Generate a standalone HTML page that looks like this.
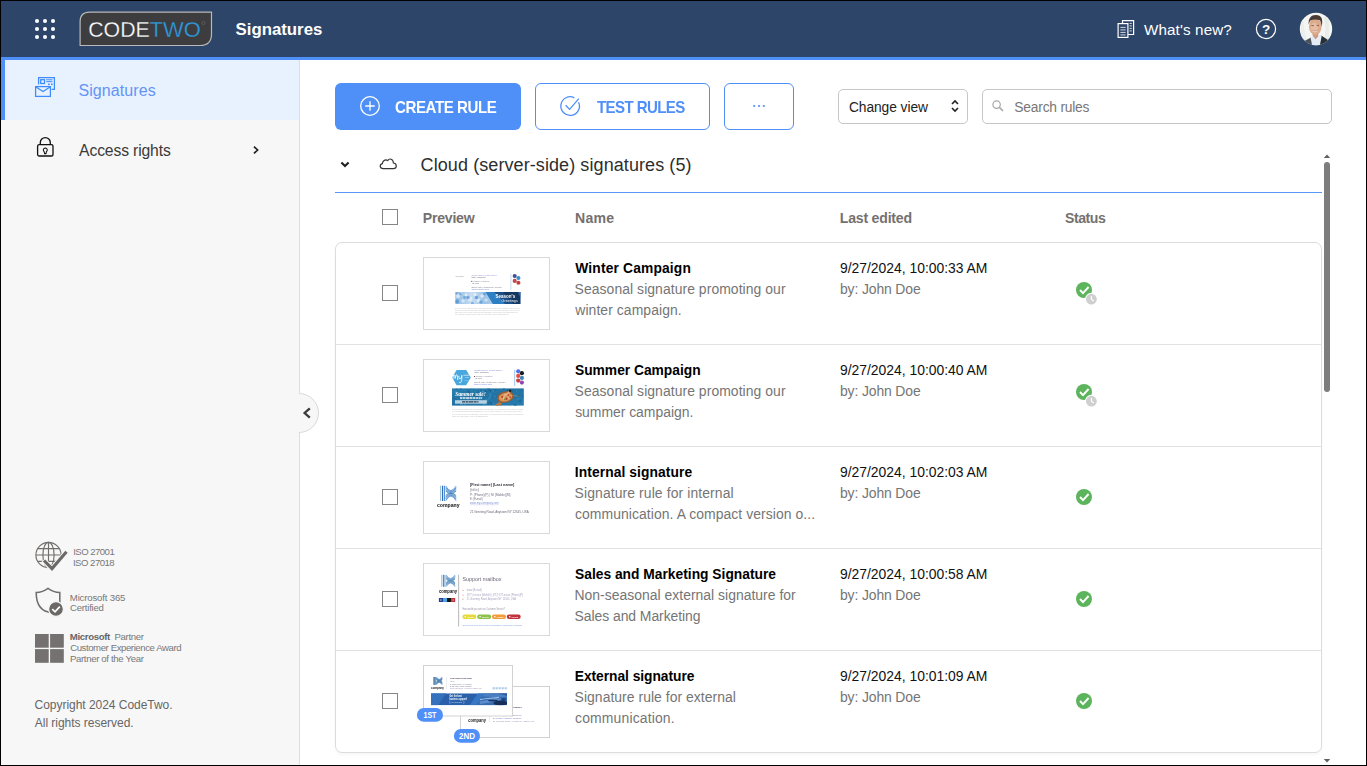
<!DOCTYPE html>
<html lang="en">
<head>
<meta charset="utf-8">
<title>Signatures</title>
<style>
*{box-sizing:border-box;margin:0;padding:0}
html,body{width:1367px;height:766px;overflow:hidden;background:#000}
body{font-family:"Liberation Sans",sans-serif;position:relative;color:#000}
.abs{position:absolute}
.t{position:absolute;white-space:nowrap;line-height:1}
#app{position:absolute;left:1px;top:1px;width:1365px;height:764px;background:#fff;overflow:hidden}
/* everything inside #app is positioned in PAGE coordinates via wrapper offset */
#pg{position:absolute;left:-1px;top:-1px;width:1367px;height:766px}
#hdr{left:1px;top:1px;width:1365px;height:56px;background:#2d4568}
#hline{left:1px;top:57px;width:1365px;height:3px;background:#4f8ff8}
#side{left:1px;top:60px;width:299px;height:705px;background:#f7f7f7;border-right:1px solid #dedede}
#selitem{left:1px;top:60px;width:298px;height:60px;background:#e8f1fe}
#selbar{left:1px;top:57px;width:4px;height:63px;background:#4f8ff8}

.btn{position:absolute;top:83px;height:47px;border-radius:6px}
.chk{position:absolute;left:382px;width:16px;height:16px;border:1px solid #868686;border-radius:0;background:#fff}
.th{font-size:14.1px;font-weight:bold;color:#747170}
#card{left:335px;top:242px;width:987px;height:511px;border:1px solid #dcdcdc;border-radius:7px;background:#fff;box-shadow:0 2px 3px rgba(0,0,0,.035)}
.sep{position:absolute;left:336px;width:985px;height:1px;background:#e2e2e2}
.thumb{position:absolute;left:423px;width:127px;height:73px;border:1px solid #d9d9d9;background:#fff;overflow:hidden}
.nm{font-size:13.8px;font-weight:bold;color:#000}
.ds{font-size:13.95px;color:#757575}
.dt{font-size:13.9px;color:#111}
</style>
</head>
<body>
<div id="app"><div id="pg">

<!-- HEADER -->
<div class="abs" id="hdr"></div>
<div class="abs" id="hline"></div>
<svg class="abs" style="left:33px;top:17px" width="24" height="24" viewBox="0 0 24 24"><g fill="#fff">
<circle cx="4" cy="4" r="2.05"/><circle cx="12" cy="4" r="2.05"/><circle cx="20" cy="4" r="2.05"/>
<circle cx="4" cy="12" r="2.05"/><circle cx="12" cy="12" r="2.05"/><circle cx="20" cy="12" r="2.05"/>
<circle cx="4" cy="20" r="2.05"/><circle cx="12" cy="20" r="2.05"/><circle cx="20" cy="20" r="2.05"/></g></svg>
<!-- logo -->
<svg class="abs" style="left:78px;top:10px" width="136" height="38" viewBox="0 0 136 38">
<path d="M2.1 35.5 V11.6 Q2.1 2.1 11.6 2.1 H133.5 V24 Q133.5 35.5 122 35.5 Z" fill="#3d3d3f" stroke="#b9b9b9" stroke-width="1.2"/>
<text id="lgc" x="10.2" y="27.1" font-family="Liberation Sans, sans-serif" font-size="22.4" fill="#fff" textLength="61.6" lengthAdjust="spacingAndGlyphs" stroke="#3d3d3f" stroke-width="0.3">CODE</text>
<text id="lgt" x="71.6" y="27.1" font-family="Liberation Sans, sans-serif" font-size="22.4" fill="#2e9be0" textLength="51.2" lengthAdjust="spacingAndGlyphs" stroke="#3d3d3f" stroke-width="0.3">TWO</text>
<circle cx="125.5" cy="13" r="1.6" fill="none" stroke="#6b6b6b" stroke-width="0.6"/>
</svg>
<div class="t" id="htitle" style="left:235.61px;top:21.5px;font-size:16.8px;font-weight:bold;color:#fff;letter-spacing:-0.003px">Signatures</div>
<!-- what's new icon -->
<svg class="abs" style="left:1116px;top:18px" width="22" height="22" viewBox="0 0 22 22" fill="none" stroke="#fff" stroke-width="1.2">
<path d="M6.5 5.5 V2.6 H17.6 V16.5 H12"/>
<rect x="2.1" y="5.6" width="9.8" height="13.8"/>
<path d="M4.4 9.4 H9.6 M4.4 11.9 H9.6 M4.4 14.4 H9.6 M4.4 16.9 H9.6" stroke-width=".8"/>
<path d="M13.6 5.4 H15.8 M13.6 7.9 H15.8 M13.6 10.4 H15.8 M13.6 12.9 H15.8" stroke-width=".8"/>
</svg>
<div class="t" id="hnew" style="left:1143.99px;top:21.5px;font-size:15.2px;color:#fff;letter-spacing:0.131px">What's new?</div>
<svg class="abs" style="left:1254px;top:17px" width="24" height="24" viewBox="0 0 24 24"><circle cx="12" cy="12" r="9.6" fill="none" stroke="#fff" stroke-width="1.2"/>
<text x="12" y="17" text-anchor="middle" font-family="Liberation Sans, sans-serif" font-weight="bold" font-size="13.5" fill="#fff">?</text></svg>
<!-- avatar -->
<svg class="abs" style="left:1299px;top:12px" width="34" height="34" viewBox="0 0 34 34">
<defs><clipPath id="avc"><circle cx="17" cy="17" r="16.2"/></clipPath>
<filter id="avb" x="-20%" y="-20%" width="140%" height="140%"><feGaussianBlur stdDeviation="0.75"/></filter></defs>
<g clip-path="url(#avc)"><rect width="34" height="34" fill="#f5f5f3"/>
<g filter="url(#avb)">
<path d="M24 6 C27 10 27 20 25 27 L30 27 V4 Z" fill="#e6ebe6" opacity=".8"/>
<path d="M4 8 C6 14 5 22 8 28 L2 28 V6 Z" fill="#e9ecee" opacity=".8"/>
<path d="M2 34 L4.5 29.5 L12 25.5 L15 34 Z" fill="#4c5159"/>
<path d="M20 34 L22.3 23.6 L30.5 29 L33 34 Z" fill="#2b2f36"/>
<path d="M11.6 26 L13.6 23 L16.6 28 L21.2 22.8 L22.6 24.4 L20.6 34.5 H13.4 Z" fill="#e3ebf6"/>
<path d="M13.4 20.5 H19.6 L19.2 24.6 L16.6 27.6 L13.8 24 Z" fill="#cf9d82"/>
<ellipse cx="16.3" cy="14.6" rx="6.3" ry="8.3" fill="#dcab8e"/>
<ellipse cx="15.4" cy="15.4" rx="3.6" ry="4.6" fill="#e9c2a9" opacity=".8"/>
<path d="M9.7 12.4 C9 6 12.6 2.8 17 3 C21.4 3 23.6 6 23.2 10.4 L22.9 14.6 C22.2 12.4 22 10 21 8.2 C18.4 7.2 14.2 7 11.4 8.4 C10.4 9.6 10.2 11 9.7 12.4 Z" fill="#4a3a35"/>
<path d="M12.4 13.6 H14.8 M17.6 13.4 H20" stroke="#7a5a4a" stroke-width=".9"/>
<path d="M13.6 19 Q16 20.9 18.6 18.8" stroke="#f3e6e0" stroke-width="1" fill="none"/>
<path d="M13.4 18.6 Q16 19.6 18.8 18.4" stroke="#b8756a" stroke-width=".5" fill="none"/>
</g></g></svg>

<!-- SIDEBAR -->
<div class="abs" id="side"></div>
<div class="abs" id="selitem"></div>
<div class="abs" id="selbar"></div>
<!-- signatures icon -->
<svg class="abs" style="left:33px;top:75px" width="24" height="24" viewBox="0 0 24 24" fill="none" stroke="#3d8bfd" stroke-width="1.25">
<path d="M5.6 9.4 V2.6 H21.4 V14.4 H18.6"/>
<rect x="7.7" y="4.7" width="3.8" height="3.8"/>
<path d="M13.2 4.8 H19.5 M13.2 6.7 H19.5" stroke-width="1"/>
<rect x="15.1" y="8.5" width="1.6" height="1.6" fill="#3d8bfd" stroke="none"/><rect x="18" y="8.5" width="1.6" height="1.6" fill="#3d8bfd" stroke="none"/>
<rect x="2.6" y="11.6" width="14.8" height="9.8" fill="#e8f1fe"/>
<path d="M3 12 L10 16.6 L17 12"/>
</svg>
<div class="t" id="snav1" style="left:78.40px;top:83px;font-size:16px;color:#6394f6;letter-spacing:0.101px">Signatures</div>
<!-- lock icon -->
<svg class="abs" style="left:33px;top:135px" width="24" height="24" viewBox="0 0 24 24" fill="none" stroke="#111" stroke-width="1.3">
<path d="M7.3 9.6 V7.6 A5 5 0 0 1 17.3 7.6 V9.6"/>
<rect x="4.6" y="9.6" width="15.4" height="11.4" rx="1.6"/>
<path d="M12.3 12.9 A2.1 2.1 0 0 1 13.4 16.7 L13 18.6 H11.6 L11.2 16.7 A2.1 2.1 0 0 1 12.3 12.9 Z" stroke-width="1.05"/>
</svg>
<div class="t" id="snav2" style="left:79.11px;top:143px;font-size:15.7px;color:#3a3a3a;letter-spacing:-0.138px">Access rights</div>
<svg class="abs" style="left:250px;top:144px" width="12" height="12" viewBox="0 0 12 12" fill="none" stroke="#222" stroke-width="1.7"><path d="M4 2.6 L7.6 6 L4 9.4"/></svg>
<!-- collapse handle -->
<div class="abs" style="left:299px;top:392px;width:21px;height:42px;overflow:hidden"><div style="position:absolute;left:-20px;top:1px;width:40px;height:40px;border-radius:50%;background:#f7f7f7;border:1px solid #d9d9d9"></div></div>
<svg class="abs" style="left:300px;top:405px" width="14" height="16" viewBox="0 0 14 16" fill="none" stroke="#3a3a3a" stroke-width="2.3"><path d="M9.8 3.3 L4.6 8 L9.8 12.7"/></svg>
<!-- badges -->
<svg class="abs" style="left:34px;top:540px" width="36" height="34" viewBox="0 0 36 34" fill="none" stroke="#716e6c" stroke-width="1.15">
<circle cx="14.5" cy="15" r="12.6"/><ellipse cx="14.5" cy="15" rx="5.6" ry="12.6"/><path d="M14.5 2.4 V27.6 M1.9 15 H27.1 M3.6 8.6 H25.4 M3.6 21.4 H25.4"/>
<path d="M9.5 20 L18 29 L33 11.5" stroke="#f7f7f7" stroke-width="5.4"/>
<path d="M10 20.5 L18 28.6 L32.5 11.8" stroke="#6b6866" stroke-width="3.1"/>
</svg>
<div class="t" id="b1a" style="left:73.16px;top:546.5px;font-size:9.6px;color:#777;letter-spacing:-0.536px">ISO 27001</div>
<div class="t" id="b1b" style="left:72.88px;top:557.5px;font-size:9.6px;color:#777;letter-spacing:-0.505px">ISO 27018</div>
<svg class="abs" style="left:34px;top:586px" width="32" height="32" viewBox="0 0 32 32" fill="none" stroke="#716e6c" stroke-width="1.55">
<path d="M18 26.8 C8 26 2.2 19 2.2 6.6 C7 6.4 10.5 5 14 2.4 C17.5 5 21 6.4 25.8 6.6 V17"/>
<circle cx="22" cy="23" r="7.4" fill="#6b6866" stroke="#f7f7f7" stroke-width="1.2"/>
<path d="M18.3 23.2 L21 25.8 L25.8 20.6" stroke="#fff" stroke-width="1.7"/>
</svg>
<div class="t" id="b2a" style="left:69.82px;top:592.5px;font-size:9.6px;color:#777;letter-spacing:-0.168px">Microsoft 365</div>
<div class="t" id="b2b" style="left:70.06px;top:603.0px;font-size:9.6px;color:#777;letter-spacing:-0.235px">Certified</div>
<svg class="abs" style="left:35px;top:634px" width="29" height="29" viewBox="0 0 29 29" fill="#747170"><rect x="0" y="0" width="13.7" height="13.7"/><rect x="15.1" y="0" width="13.7" height="13.7"/><rect x="0" y="15.1" width="13.7" height="13.7"/><rect x="15.1" y="15.1" width="13.7" height="13.7"/></svg>
<div class="t" id="b3a" style="left:69.86px;top:632px;font-size:9.6px;color:#777;letter-spacing:-0.352px"><b style="color:#666">Microsoft</b>&nbsp; Partner</div>
<div class="t" id="b3b" style="left:70.13px;top:643px;font-size:9.6px;color:#777;letter-spacing:-0.414px">Customer Experience Award</div>
<div class="t" id="b3c" style="left:69.90px;top:654px;font-size:9.6px;color:#777;letter-spacing:-0.334px">Partner of the Year</div>
<div class="t" id="cp1" style="left:34.57px;top:698.5px;font-size:12px;color:#666;letter-spacing:-0.033px">Copyright 2024 CodeTwo.</div>
<div class="t" id="cp2" style="left:34.82px;top:716.5px;font-size:12px;color:#666;letter-spacing:-0.030px">All rights reserved.</div>

<!-- MAIN -->
<div class="btn" style="left:335px;width:186px;background:#4f8ff8"></div>
<svg class="abs" style="left:358px;top:94px" width="24" height="24" viewBox="0 0 24 24" fill="none" stroke="#fff" stroke-width="1.3"><circle cx="12" cy="12" r="9.3"/><path d="M12 7.2 V16.8 M7.2 12 H16.8"/></svg>
<div class="t" id="bt1" style="left:395.45px;top:98.5px;font-size:16.2px;transform:scaleX(.93);transform-origin:0 0;font-weight:bold;color:#fff;letter-spacing:-0.447px">CREATE RULE</div>
<div class="btn" style="left:535px;width:175px;border:1px solid #4f8ff8;background:#fff"></div>
<svg class="abs" style="left:558px;top:94px" width="24" height="24" viewBox="0 0 24 24" fill="none" stroke="#4f8ff8" stroke-width="1.3"><path d="M20.6 8.2 A9.3 9.3 0 1 1 16.4 3.8"/><path d="M7.6 11.2 L11.6 15.4 L20.8 4.6"/></svg>
<div class="t" id="bt2" style="left:597.39px;top:98.5px;font-size:16.2px;transform:scaleX(.93);transform-origin:0 0;font-weight:bold;color:#4f8ff8;letter-spacing:-0.650px">TEST RULES</div>
<div class="btn" style="left:724px;width:70px;border:1px solid #4f8ff8;background:#fff"></div>
<svg class="abs" style="left:750px;top:101.7px" width="18" height="8" viewBox="0 0 18 8" fill="#4f8ff8"><circle cx="4.2" cy="4" r="1.1"/><circle cx="9" cy="4" r="1.1"/><circle cx="13.8" cy="4" r="1.1"/></svg>
<!-- select -->
<div class="abs" style="left:838px;top:89px;width:130px;height:35px;border:1px solid #c6c6c6;border-radius:5px;background:#fff"></div>
<div class="t" id="sel" style="left:848.89px;top:100.5px;font-size:13.8px;color:#222;letter-spacing:-0.061px">Change view</div>
<svg class="abs" style="left:949px;top:97px" width="12" height="18" viewBox="0 0 12 18" fill="none" stroke="#222" stroke-width="1.6"><path d="M3 7 L6 4 L9 7 M3 11 L6 14 L9 11"/></svg>
<!-- search -->
<div class="abs" style="left:982px;top:89px;width:350px;height:35px;border:1px solid #c6c6c6;border-radius:5px;background:#fff"></div>
<svg class="abs" style="left:991px;top:99px" width="14" height="14" viewBox="0 0 14 14" fill="none" stroke="#a9a9a9" stroke-width="1.2"><circle cx="5.6" cy="5.6" r="3.7"/><path d="M8.4 8.4 L12 12" stroke-width="1.6"/></svg>
<div class="t" id="srch" style="left:1014.36px;top:100.5px;font-size:13.8px;color:#777;letter-spacing:-0.217px">Search rules</div>
<!-- section heading -->
<svg class="abs" style="left:338px;top:158px" width="14" height="14" viewBox="0 0 14 14" fill="none" stroke="#222" stroke-width="2.1"><path d="M3.4 4.4 L7 8 L10.6 4.4"/></svg>
<svg class="abs" style="left:378px;top:155px" width="20" height="18" viewBox="0 0 20 18" fill="none" stroke="#333" stroke-width="1.15"><path d="M5.2 13.6 C1.6 13.6 1.2 9.4 4.4 8.6 C4.6 5.6 7.6 4 9.8 5.6 C11.2 3 15.2 3.6 15.4 8 C19.2 8.2 19.2 13.6 15.4 13.6 Z"/></svg>
<div class="t" id="sect" style="left:420.59px;top:156.2px;font-size:18px;color:#2e2e2e;letter-spacing:0.087px">Cloud (server-side) signatures (5)</div>
<div class="abs" style="left:335px;top:192px;width:987px;height:1px;background:#5a97f8"></div>
<!-- table header -->
<div class="chk" style="top:209px"></div>
<div class="t th" id="th1" style="left:422.72px;top:211.1px;letter-spacing:-0.219px">Preview</div>
<div class="t th" id="th2" style="left:574.96px;top:211.1px;letter-spacing:0.267px">Name</div>
<div class="t th" id="th3" style="left:839.82px;top:211.1px;letter-spacing:-0.217px">Last edited</div>
<div class="t th" id="th4" style="left:1065.01px;top:211.1px;letter-spacing:-0.446px">Status</div>
<!-- TDEFS --><svg class="abs" width="0" height="0" style="left:0;top:0"><defs>
<filter id="bl3" x="-5%" y="-5%" width="110%" height="110%"><feGaussianBlur stdDeviation="0.35"/></filter>
<filter id="bl5" x="-5%" y="-5%" width="110%" height="110%"><feGaussianBlur stdDeviation="0.55"/></filter>
<filter id="bl9" x="-5%" y="-5%" width="110%" height="110%"><feGaussianBlur stdDeviation="0.9"/></filter>
<linearGradient id="wg" x1="0" x2="1" y1="0" y2="0"><stop offset="0" stop-color="#8fbbe3"/><stop offset=".25" stop-color="#c6ddf3"/><stop offset=".45" stop-color="#9cc4e8"/><stop offset="1" stop-color="#e4effa"/></linearGradient>
<linearGradient id="sg" x1="0" x2="1" y1="0" y2="1"><stop offset="0" stop-color="#2a7fb0"/><stop offset=".5" stop-color="#2272a2"/><stop offset="1" stop-color="#297dae"/></linearGradient>
<linearGradient id="eg" x1="0" x2="1" y1="0" y2="0"><stop offset="0" stop-color="#2a62ac"/><stop offset=".5" stop-color="#2c6cbc"/><stop offset="1" stop-color="#2a64b0"/></linearGradient>
</defs></svg>
<!-- /TDEFS -->
<!-- card -->
<div class="abs" id="card"></div>
<div class="chk" style="top:285px"></div>
<!-- THUMB1 --><div class="thumb" style="top:257px"></div><svg class="abs" style="left:424px;top:258px" width="125" height="71" viewBox="424 258 125 71" ><g filter="url(#bl3)"><text x="455.5" y="277" font-family="Liberation Sans, sans-serif" font-size="2.3" fill="#8f8a86" opacity="0.9" textLength="8.50" lengthAdjust="spacingAndGlyphs">{Photo}</text><text x="471.4" y="276.1" font-family="Liberation Sans, sans-serif" font-size="2.2" fill="#8f80d4" opacity="0.9" textLength="25.60" lengthAdjust="spacingAndGlyphs">{First name} {Last name}</text><text x="471.4" y="278.3" font-family="Liberation Sans, sans-serif" font-size="2.3" fill="#4e4a58" opacity="0.9" textLength="14.60" lengthAdjust="spacingAndGlyphs">{Title}, {Company}</text><rect x="471.2" y="280.90" width="1.10" height="0.8" fill="#4a3020" opacity="1"/><text x="473" y="282.2" font-family="Liberation Sans, sans-serif" font-size="2.3" fill="#6d6a92" opacity="0.9" textLength="16.50" lengthAdjust="spacingAndGlyphs">{Mobile} | {Phone}</text><text x="472" y="284.2" font-family="Liberation Sans, sans-serif" font-size="2.3" fill="#625d6e" opacity="0.9" textLength="7.00" lengthAdjust="spacingAndGlyphs">{E-mail}</text><text x="471.4" y="288.1" font-family="Liberation Sans, sans-serif" font-size="2.4" fill="#6c6678" opacity="0.9" textLength="30.60" lengthAdjust="spacingAndGlyphs">{Street}, {City}, {Postal code}, {Country}</text><text x="471.4" y="290.1" font-family="Liberation Sans, sans-serif" font-size="2.3" fill="#5f73d6" opacity="0.9" textLength="17.60" lengthAdjust="spacingAndGlyphs">www.example.com</text><rect x="510" y="274.00" width="1.60" height="16" fill="#dde9f6" opacity="1"/><circle cx="514.7" cy="276" r="2.05" fill="#3d4f9a"/><circle cx="518.4" cy="278" r="2.05" fill="#3a8fcb"/><circle cx="514.7" cy="280.9" r="2.05" fill="#bf4a52"/><circle cx="518.4" cy="282.8" r="2.05" fill="#c9413f"/></g><clipPath id="wbc"><rect x="455.2" y="292" width="65.3" height="12"/></clipPath><g filter="url(#bl3)"><g clip-path="url(#wbc)"><rect x="455.2" y="292" width="65.3" height="12" fill="url(#wg)"/><circle cx="458" cy="296" r="2.2" fill="#fff" opacity="0.55"/><circle cx="463" cy="301" r="1.8" fill="#fff" opacity="0.5"/><circle cx="466" cy="295" r="1.4" fill="#fff" opacity="0.6"/><circle cx="470" cy="299" r="2.4" fill="#fff" opacity="0.45"/><circle cx="475" cy="294.5" r="1.6" fill="#fff" opacity="0.6"/><circle cx="478.5" cy="300.5" r="2" fill="#fff" opacity="0.55"/><circle cx="482" cy="296" r="1.8" fill="#fff" opacity="0.6"/><circle cx="486" cy="300" r="1.6" fill="#fff" opacity="0.5"/><circle cx="461" cy="293.5" r="1.2" fill="#fff" opacity="0.5"/><circle cx="473" cy="302.5" r="1.3" fill="#fff" opacity="0.5"/><circle cx="457" cy="301.5" r="2" fill="#4a8dcf" opacity="0.7"/><circle cx="468" cy="297.5" r="1.8" fill="#4a8dcf" opacity="0.65"/><circle cx="476.5" cy="297.5" r="1.7" fill="#4a8dcf" opacity="0.7"/><circle cx="481" cy="302" r="1.8" fill="#4a8dcf" opacity="0.6"/><circle cx="464.5" cy="297.5" r="1.4" fill="#4a8dcf" opacity="0.6"/><circle cx="460.5" cy="294" r="1.3" fill="#4a8dcf" opacity="0.6"/><circle cx="472.5" cy="303" r="1.5" fill="#4a8dcf" opacity="0.6"/><circle cx="484.5" cy="294" r="1.4" fill="#4a8dcf" opacity="0.6"/><circle cx="456.5" cy="293.5" r="1.2" fill="#4a8dcf" opacity="0.5"/><path d="M485.5 292 H520.5 V304 H492.8 Z" fill="#2f7fc4"/><path d="M494.5 292 H520.5 V304 H505 Z" fill="#1c4f88"/><path d="M503 292 H520.5 V304 H513.5 Z" fill="#15375f"/><path d="M518 292 H520.5 V298 Z" fill="#2a6cae"/></g></g><g filter="url(#bl3)"><text x="495.6" y="298.3" font-family="Liberation Sans, sans-serif" font-size="4.6" font-weight="bold" fill="#fff" textLength="19.6" lengthAdjust="spacingAndGlyphs">Season's</text><text x="501.6" y="302.4" font-family="Liberation Sans, sans-serif" font-size="3.9" fill="#eef4fb" textLength="16.2" lengthAdjust="spacingAndGlyphs">Greetings</text><text x="455" y="309.0" font-family="Liberation Sans, sans-serif" font-size="1.9" fill="#a39ca3" opacity="0.7" textLength="65.00" lengthAdjust="spacingAndGlyphs">This e-mail and any attachments are confidential and intended solely for the addressee and may also be</text><text x="455" y="311.0" font-family="Liberation Sans, sans-serif" font-size="1.9" fill="#a39ca3" opacity="0.7" textLength="64.50" lengthAdjust="spacingAndGlyphs">privileged or exempt from disclosure under applicable law. If you are not the addressee, or have received</text><text x="455" y="313.0" font-family="Liberation Sans, sans-serif" font-size="1.9" fill="#a39ca3" opacity="0.7" textLength="62.50" lengthAdjust="spacingAndGlyphs">this e-mail in error, please notify the sender immediately, delete it from your system and do not</text><text x="455" y="315.0" font-family="Liberation Sans, sans-serif" font-size="1.9" fill="#a39ca3" opacity="0.7" textLength="54.00" lengthAdjust="spacingAndGlyphs">copy, disclose or otherwise act upon any part of this e-mail or its attachments.</text></g></svg><!-- /THUMB1 -->
<div class="t nm" id="nm1" style="left:575.29px;top:261.5px;letter-spacing:0.157px">Winter Campaign</div>
<div class="t ds" id="da1" style="left:574.62px;top:282.5px;letter-spacing:0.056px">Seasonal signature promoting our</div>
<div class="t ds" id="db1" style="left:575.30px;top:303.5px;letter-spacing:0.068px">winter campaign.</div>
<div class="t dt" id="dt1" style="left:839.98px;top:262.0px;letter-spacing:-0.002px">9/27/2024, 10:00:33 AM</div>
<div class="t ds" id="by1" style="left:839.99px;top:282.5px;letter-spacing:-0.132px">by: John Doe</div>
<svg class="abs" style="left:1074px;top:280px" width="26" height="26" viewBox="0 0 26 26"><circle cx="10" cy="10" r="8" fill="#5cb45c"/><path d="M6 10 L9 13.2 L14.6 7" fill="none" stroke="#fff" stroke-width="1.9"/><circle cx="17.4" cy="19.2" r="6.4" fill="#fff"/><circle cx="17.4" cy="19.2" r="5.4" fill="#cfcfcf"/><path d="M17.4 16 V19.4 L19.8 21" fill="none" stroke="#fff" stroke-width="1.1"/></svg>
<div class="sep" style="top:344px"></div>
<div class="chk" style="top:387px"></div>
<!-- THUMB2 --><div class="thumb" style="top:359px"></div><svg class="abs" style="left:424px;top:360px" width="125" height="71" viewBox="424 360 125 71" ><g filter="url(#bl3)"><path d="M452 377.6 L456.6 370 H466.2 L470.8 377.6 L466.2 385.2 H456.6 Z" fill="#47a7de"/><path d="M452.8 380.4 C453 373.4 454.6 372.8 455.2 378.4 C455.8 373.4 457.4 372.8 457.8 380 M458.8 375.8 C458.8 380 461.4 380 461.8 375.4 C462 381.4 461.2 383.4 459 382.4" fill="none" stroke="#fff" stroke-width="0.95" opacity=".95"/><rect x="463.4" y="374.75" width="6.00" height="0.9" fill="#fff" opacity="0.7"/><rect x="465" y="377.25" width="4.00" height="0.7" fill="#fff" opacity="0.5"/><rect x="464" y="380.30" width="4.50" height="0.6" fill="#fff" opacity="0.3"/><text x="474" y="371.3" font-family="Liberation Sans, sans-serif" font-size="2.2" fill="#6f7cdc" opacity="0.9" textLength="28.50" lengthAdjust="spacingAndGlyphs">{First name} {Last name}</text><text x="474" y="373.3" font-family="Liberation Sans, sans-serif" font-size="2.3" fill="#4e4a58" opacity="0.9" textLength="15.00" lengthAdjust="spacingAndGlyphs">{Title}, {Company}</text><rect x="474" y="376.00" width="1.10" height="0.8" fill="#4a3020" opacity="1"/><text x="475.8" y="377.3" font-family="Liberation Sans, sans-serif" font-size="2.3" fill="#6d6a92" opacity="0.9" textLength="16.70" lengthAdjust="spacingAndGlyphs">{Mobile} | {Phone}</text><text x="475" y="379.3" font-family="Liberation Sans, sans-serif" font-size="2.3" fill="#625d6e" opacity="0.9" textLength="7.00" lengthAdjust="spacingAndGlyphs">{E-mail}</text><text x="474" y="383.2" font-family="Liberation Sans, sans-serif" font-size="2.4" fill="#6c6678" opacity="0.9" textLength="31.50" lengthAdjust="spacingAndGlyphs">{Street}, {City}, {Postal code}, {Country}</text><text x="474" y="385.2" font-family="Liberation Sans, sans-serif" font-size="2.3" fill="#5f73d6" opacity="0.9" textLength="18.00" lengthAdjust="spacingAndGlyphs">www.example.com</text><rect x="514.1" y="370.00" width="1.10" height="16" fill="#a6cbea" opacity="1"/><circle cx="518.2" cy="371.3" r="2.1" fill="#4c6ef2"/><circle cx="521.9" cy="373.2" r="2.1" fill="#1b1b1b"/><circle cx="518.2" cy="375.9" r="2.1" fill="#ea4a3f"/><circle cx="521.9" cy="377.9" r="2.1" fill="#3f86b8"/><circle cx="518.2" cy="380.6" r="2.1" fill="#c5403f"/><circle cx="521.9" cy="382.6" r="2.1" fill="#9147b0"/></g><g filter="url(#bl3)"><clipPath id="sbc"><rect x="452" y="388.2" width="71.9" height="17.6"/></clipPath><g clip-path="url(#sbc)"><rect x="452" y="388.2" width="71.9" height="17.6" fill="url(#sg)"/><circle cx="475.3" cy="390.9" r="0.65" fill="#3a94c4" opacity=".55"/><circle cx="490.5" cy="394.6" r="1.24" fill="#3a94c4" opacity=".55"/><circle cx="467.4" cy="389.7" r="0.65" fill="#1d6696" opacity=".55"/><circle cx="458.5" cy="395.7" r="0.69" fill="#175a88" opacity=".55"/><circle cx="468.1" cy="399.2" r="1.00" fill="#3a94c4" opacity=".55"/><circle cx="480.5" cy="405.4" r="0.99" fill="#3a94c4" opacity=".55"/><circle cx="461.6" cy="395.6" r="0.68" fill="#175a88" opacity=".55"/><circle cx="474.2" cy="402.6" r="0.67" fill="#1a6090" opacity=".55"/><circle cx="493.1" cy="391.5" r="0.98" fill="#3a94c4" opacity=".55"/><circle cx="456.5" cy="389.2" r="0.95" fill="#1a6090" opacity=".55"/><circle cx="490.2" cy="401.9" r="1.01" fill="#1d6696" opacity=".55"/><circle cx="484.6" cy="393.5" r="1.09" fill="#1a6090" opacity=".55"/><circle cx="469.6" cy="398.3" r="0.95" fill="#175a88" opacity=".55"/><circle cx="476.7" cy="396.1" r="1.29" fill="#175a88" opacity=".55"/><circle cx="460.5" cy="395.6" r="0.71" fill="#4aa2cf" opacity=".55"/><circle cx="487.2" cy="388.9" r="1.14" fill="#3a94c4" opacity=".55"/><circle cx="493.2" cy="403.6" r="0.84" fill="#4aa2cf" opacity=".55"/><circle cx="477.2" cy="396.9" r="0.65" fill="#1d6696" opacity=".55"/><circle cx="458.7" cy="393.0" r="0.64" fill="#3a94c4" opacity=".55"/><circle cx="502.4" cy="399.6" r="0.80" fill="#1d6696" opacity=".55"/><circle cx="479.7" cy="400.0" r="1.26" fill="#3a94c4" opacity=".55"/><circle cx="477.6" cy="399.0" r="0.64" fill="#1d6696" opacity=".55"/><circle cx="507.2" cy="390.5" r="0.88" fill="#1a6090" opacity=".55"/><circle cx="517.9" cy="396.9" r="0.91" fill="#1a6090" opacity=".55"/><circle cx="491.5" cy="403.7" r="1.20" fill="#1d6696" opacity=".55"/><circle cx="472.0" cy="395.5" r="1.08" fill="#4aa2cf" opacity=".55"/><circle cx="479.4" cy="392.3" r="0.72" fill="#3a94c4" opacity=".55"/><circle cx="468.7" cy="392.3" r="1.18" fill="#1d6696" opacity=".55"/><circle cx="465.1" cy="393.2" r="0.89" fill="#1a6090" opacity=".55"/><circle cx="478.5" cy="398.2" r="1.08" fill="#1a6090" opacity=".55"/><circle cx="489.1" cy="399.1" r="0.92" fill="#3a94c4" opacity=".55"/><circle cx="514.6" cy="405.0" r="0.87" fill="#175a88" opacity=".55"/><circle cx="480.7" cy="390.0" r="0.64" fill="#1d6696" opacity=".55"/><circle cx="456.8" cy="391.9" r="0.68" fill="#1a6090" opacity=".55"/><circle cx="495.2" cy="390.0" r="0.71" fill="#175a88" opacity=".55"/><circle cx="459.3" cy="394.6" r="0.65" fill="#3a94c4" opacity=".55"/><circle cx="467.0" cy="394.8" r="1.27" fill="#4aa2cf" opacity=".55"/><circle cx="495.3" cy="396.5" r="1.19" fill="#3a94c4" opacity=".55"/><circle cx="523.4" cy="396.4" r="0.82" fill="#1d6696" opacity=".55"/><circle cx="462.4" cy="401.4" r="0.94" fill="#4aa2cf" opacity=".55"/><circle cx="501.8" cy="397.3" r="1.27" fill="#1a6090" opacity=".55"/><circle cx="490.0" cy="390.8" r="1.24" fill="#175a88" opacity=".55"/><circle cx="506.5" cy="393.4" r="1.09" fill="#3a94c4" opacity=".55"/><circle cx="470.8" cy="394.7" r="0.85" fill="#1a6090" opacity=".55"/><circle cx="468.0" cy="397.7" r="0.83" fill="#175a88" opacity=".55"/><circle cx="468.0" cy="402.5" r="1.16" fill="#1a6090" opacity=".55"/><circle cx="510.8" cy="401.2" r="0.74" fill="#1a6090" opacity=".55"/><circle cx="487.4" cy="401.1" r="1.15" fill="#3a94c4" opacity=".55"/><circle cx="486.0" cy="391.6" r="1.27" fill="#175a88" opacity=".55"/><circle cx="484.2" cy="404.7" r="1.27" fill="#4aa2cf" opacity=".55"/><circle cx="478.2" cy="392.1" r="0.93" fill="#1a6090" opacity=".55"/><circle cx="476.3" cy="396.7" r="1.19" fill="#175a88" opacity=".55"/><circle cx="486.5" cy="399.7" r="1.18" fill="#3a94c4" opacity=".55"/><circle cx="460.6" cy="395.0" r="0.93" fill="#1a6090" opacity=".55"/><circle cx="464.8" cy="402.1" r="0.66" fill="#4aa2cf" opacity=".55"/><circle cx="520.0" cy="400.9" r="0.88" fill="#1d6696" opacity=".55"/><circle cx="520.1" cy="401.0" r="1.30" fill="#1a6090" opacity=".55"/><circle cx="454.0" cy="398.6" r="1.16" fill="#1d6696" opacity=".55"/><circle cx="462.5" cy="402.7" r="1.06" fill="#1d6696" opacity=".55"/><circle cx="477.2" cy="397.9" r="0.61" fill="#1a6090" opacity=".55"/><circle cx="509.5" cy="401.0" r="0.97" fill="#3a94c4" opacity=".55"/><circle cx="519.1" cy="395.8" r="1.18" fill="#1a6090" opacity=".55"/><circle cx="467.2" cy="392.6" r="0.95" fill="#4aa2cf" opacity=".55"/><circle cx="506.9" cy="393.9" r="0.89" fill="#175a88" opacity=".55"/><circle cx="461.4" cy="404.2" r="1.23" fill="#4aa2cf" opacity=".55"/><circle cx="499.6" cy="402.5" r="0.89" fill="#175a88" opacity=".55"/><circle cx="518.0" cy="397.0" r="0.71" fill="#175a88" opacity=".55"/><circle cx="488.7" cy="403.6" r="1.03" fill="#1a6090" opacity=".55"/><circle cx="507.8" cy="390.8" r="0.93" fill="#1a6090" opacity=".55"/><circle cx="504.1" cy="398.0" r="1.08" fill="#4aa2cf" opacity=".55"/><circle cx="490.2" cy="396.7" r="1.22" fill="#3a94c4" opacity=".55"/><circle cx="456.1" cy="391.6" r="1.14" fill="#3a94c4" opacity=".55"/><circle cx="488.5" cy="398.1" r="0.91" fill="#3a94c4" opacity=".55"/><circle cx="496.0" cy="397.1" r="0.74" fill="#175a88" opacity=".55"/><circle cx="471.9" cy="397.1" r="0.96" fill="#1d6696" opacity=".55"/><circle cx="469.8" cy="397.4" r="1.25" fill="#4aa2cf" opacity=".55"/><circle cx="516.2" cy="391.8" r="0.70" fill="#1d6696" opacity=".55"/><circle cx="460.7" cy="396.0" r="1.07" fill="#3a94c4" opacity=".55"/><circle cx="482.8" cy="391.9" r="1.15" fill="#4aa2cf" opacity=".55"/><circle cx="516.5" cy="390.9" r="0.70" fill="#4aa2cf" opacity=".55"/><circle cx="515.5" cy="405.2" r="1.12" fill="#1a6090" opacity=".55"/><circle cx="458.8" cy="403.8" r="1.29" fill="#1a6090" opacity=".55"/><circle cx="511.9" cy="391.0" r="1.30" fill="#1d6696" opacity=".55"/><circle cx="481.0" cy="395.6" r="0.82" fill="#4aa2cf" opacity=".55"/><circle cx="503.9" cy="388.5" r="0.92" fill="#175a88" opacity=".55"/><circle cx="502.6" cy="395.0" r="1.04" fill="#175a88" opacity=".55"/><circle cx="488.8" cy="389.3" r="1.28" fill="#1a6090" opacity=".55"/><circle cx="459.5" cy="392.9" r="1.23" fill="#3a94c4" opacity=".55"/><circle cx="465.1" cy="401.5" r="1.19" fill="#1d6696" opacity=".55"/><circle cx="500.6" cy="404.8" r="0.70" fill="#1d6696" opacity=".55"/><circle cx="518.1" cy="398.2" r="0.66" fill="#4aa2cf" opacity=".55"/><circle cx="456.1" cy="400.3" r="1.23" fill="#1d6696" opacity=".55"/><circle cx="471.3" cy="388.5" r="1.16" fill="#3a94c4" opacity=".55"/><circle cx="458.0" cy="403.3" r="0.79" fill="#3a94c4" opacity=".55"/><circle cx="460.7" cy="388.4" r="0.89" fill="#175a88" opacity=".55"/><circle cx="517.8" cy="399.1" r="0.97" fill="#3a94c4" opacity=".55"/><circle cx="469.1" cy="390.1" r="0.78" fill="#1a6090" opacity=".55"/><circle cx="465.0" cy="404.6" r="0.97" fill="#4aa2cf" opacity=".55"/><circle cx="466.8" cy="396.0" r="0.79" fill="#1a6090" opacity=".55"/><circle cx="509.8" cy="405.7" r="0.61" fill="#3a94c4" opacity=".55"/><circle cx="504.7" cy="397.9" r="0.96" fill="#1a6090" opacity=".55"/><circle cx="469.7" cy="396.1" r="1.06" fill="#1d6696" opacity=".55"/><circle cx="491.3" cy="403.8" r="0.82" fill="#175a88" opacity=".55"/><circle cx="467.5" cy="392.2" r="1.18" fill="#1a6090" opacity=".55"/><circle cx="502.8" cy="399.4" r="1.29" fill="#1d6696" opacity=".55"/><circle cx="522.6" cy="402.9" r="0.65" fill="#3a94c4" opacity=".55"/><circle cx="505.3" cy="392.7" r="0.64" fill="#1a6090" opacity=".55"/><circle cx="499.8" cy="394.9" r="1.07" fill="#175a88" opacity=".55"/><circle cx="472.3" cy="392.5" r="0.63" fill="#4aa2cf" opacity=".55"/><circle cx="465.3" cy="392.9" r="0.78" fill="#3a94c4" opacity=".55"/></g><text x="455.2" y="396" font-family="Liberation Serif, serif" font-style="italic" font-weight="bold" font-size="6.7" fill="#fff" textLength="30.6" lengthAdjust="spacingAndGlyphs">Summer sale!</text><line x1="460" y1="397.9" x2="482.2" y2="397.9" stroke="#f2f8fc" stroke-width="1.5" stroke-dasharray="2.2 .5 2.6 .5 3.6 .5 2.6 .5 2.2 .5 2.4 .5 2 .5" opacity="0.95"/><rect x="455" y="400.2" width="31.8" height="3.5" fill="#cfe3ee" opacity=".85"/><line x1="462" y1="401.9" x2="478.5" y2="401.9" stroke="#22303c" stroke-width="1.3" stroke-dasharray="3.4 .5 2.6 .5 4.2 .5 3 .5" opacity="0.9"/><g transform="rotate(-14 505 397.2)"><path d="M497.2 397.4 C497.4 392.6 502 391.2 506.5 391.6 C511 392 514 394.4 513.8 397.6 C513.6 401 510 402.6 505.4 402.6 C500.6 402.6 497 401.4 497.2 397.4 Z" fill="#9a5c36"/><ellipse cx="505.6" cy="397.2" rx="6.9" ry="4.3" fill="#d99a58"/><circle cx="502.4" cy="396.2" r="1.1" fill="#b8482f"/><circle cx="506.2" cy="399" r="1.1" fill="#a8402c"/><circle cx="508.8" cy="396" r="1" fill="#c05030"/><circle cx="504.4" cy="399.4" r="0.8" fill="#6f8a3a"/><circle cx="505.8" cy="395" r="0.8" fill="#f0d8a0"/><circle cx="510.2" cy="398.6" r="0.8" fill="#b8482f"/><circle cx="503.2" cy="398.2" r="0.6" fill="#f0d8a0"/><circle cx="508" cy="398.6" r="0.6" fill="#e8e0d0"/><path d="M498.6 400.2 L493.6 402.2 L495.4 404.2 L497.6 403.2 L498.4 404.6 L500.4 402.4 Z" fill="#b8763f"/></g><path d="M509.4 391.6 C507.6 393.2 505.6 395.4 503.6 397.4" stroke="#e0aa88" stroke-width="1.5" fill="none" stroke-linecap="round"/><circle cx="510" cy="390.7" r="1.25" fill="#241c1a"/><path d="M513 395.2 L519.6 396.6" stroke="#b89860" stroke-width=".5"/></g><g filter="url(#bl3)"><text x="452" y="409.90000000000003" font-family="Liberation Sans, sans-serif" font-size="1.9" fill="#a39ca3" opacity="0.7" textLength="71.00" lengthAdjust="spacingAndGlyphs">This e-mail and any attachments are confidential and intended solely for the addressee and may also be privileged</text><text x="452" y="412.1" font-family="Liberation Sans, sans-serif" font-size="1.9" fill="#a39ca3" opacity="0.7" textLength="70.00" lengthAdjust="spacingAndGlyphs">or exempt from disclosure under applicable law. If you are not the addressee, or have received this e-mail in</text><text x="452" y="415.1" font-family="Liberation Sans, sans-serif" font-size="1.9" fill="#a39ca3" opacity="0.7" textLength="71.00" lengthAdjust="spacingAndGlyphs">error, please notify the sender immediately, delete it from your system and do not copy, disclose or otherwise act</text><text x="452" y="417.1" font-family="Liberation Sans, sans-serif" font-size="1.9" fill="#a39ca3" opacity="0.7" textLength="36.00" lengthAdjust="spacingAndGlyphs">upon any part of this e-mail or its attachments.</text></g></svg><!-- /THUMB2 -->
<div class="t nm" id="nm2" style="left:575.01px;top:363.5px;letter-spacing:-0.009px">Summer Campaign</div>
<div class="t ds" id="da2" style="left:574.62px;top:384.5px;letter-spacing:0.056px">Seasonal signature promoting our</div>
<div class="t ds" id="db2" style="left:575.14px;top:405.5px;letter-spacing:-0.023px">summer campaign.</div>
<div class="t dt" id="dt2" style="left:839.98px;top:364.0px;letter-spacing:-0.002px">9/27/2024, 10:00:40 AM</div>
<div class="t ds" id="by2" style="left:839.99px;top:384.5px;letter-spacing:-0.132px">by: John Doe</div>
<svg class="abs" style="left:1074px;top:382px" width="26" height="26" viewBox="0 0 26 26"><circle cx="10" cy="10" r="8" fill="#5cb45c"/><path d="M6 10 L9 13.2 L14.6 7" fill="none" stroke="#fff" stroke-width="1.9"/><circle cx="17.4" cy="19.2" r="6.4" fill="#fff"/><circle cx="17.4" cy="19.2" r="5.4" fill="#cfcfcf"/><path d="M17.4 16 V19.4 L19.8 21" fill="none" stroke="#fff" stroke-width="1.1"/></svg>
<div class="sep" style="top:446px"></div>
<div class="chk" style="top:489px"></div>
<!-- THUMB3 --><div class="thumb" style="top:461px"></div><svg class="abs" style="left:424px;top:462px" width="125" height="71" viewBox="424 462 125 71" ><g filter="url(#bl3)"><rect x="440.15" y="485.7" width="1.05" height="15.3" fill="#9ab8cf"/><rect x="442.00" y="485.7" width="1.05" height="15.3" fill="#2f6fc0"/><rect x="443.80" y="485.7" width="1.05" height="15.3" fill="#3a84d6"/><g fill="none" stroke-width="1.58" opacity=".55"><path d="M445.70 486.10 Q450.90 495.20 456.10 486.10" stroke="#cfe2f6"/><path d="M445.70 500.60 Q450.90 491.50 456.10 500.60" stroke="#cfe2f6"/><path d="M445.70 487.75 Q450.90 495.45 456.10 487.75" stroke="#cfe2f6"/><path d="M445.70 498.95 Q450.90 491.25 456.10 498.95" stroke="#cfe2f6"/><path d="M445.70 489.40 Q450.90 495.70 456.10 489.40" stroke="#cfe2f6"/><path d="M445.70 497.30 Q450.90 491.00 456.10 497.30" stroke="#cfe2f6"/><path d="M445.70 491.05 Q450.90 495.95 456.10 491.05" stroke="#cfe2f6"/><path d="M445.70 495.65 Q450.90 490.75 456.10 495.65" stroke="#cfe2f6"/></g><g fill="none" stroke-width="0.75"><path d="M445.70 486.10 Q450.90 495.20 456.10 486.10" stroke="#3a84d6"/><path d="M445.70 500.60 Q450.90 491.50 456.10 500.60" stroke="#3a84d6"/><path d="M445.70 487.75 Q450.90 495.45 456.10 487.75" stroke="#2f6fc0"/><path d="M445.70 498.95 Q450.90 491.25 456.10 498.95" stroke="#2f6fc0"/><path d="M445.70 489.40 Q450.90 495.70 456.10 489.40" stroke="#3a84d6"/><path d="M445.70 497.30 Q450.90 491.00 456.10 497.30" stroke="#3a84d6"/><path d="M445.70 491.05 Q450.90 495.95 456.10 491.05" stroke="#2f6fc0"/><path d="M445.70 495.65 Q450.90 490.75 456.10 495.65" stroke="#2f6fc0"/></g><g fill="none" stroke="#78a6b8" stroke-width="0.68"><path d="M445.70 489.45 Q450.30 493.35 445.70 497.25"/><path d="M456.10 489.45 Q451.50 493.35 456.10 497.25"/><path d="M447.20 490.35 Q451.20 493.35 447.20 496.35"/><path d="M454.60 490.35 Q450.60 493.35 454.60 496.35"/></g><text x="437" y="506.9" font-family="Liberation Sans, sans-serif" font-size="6.1" font-weight="bold" fill="#111" textLength="22.6" lengthAdjust="spacingAndGlyphs">company</text><text x="470" y="485.6" font-family="Liberation Sans, sans-serif" font-size="4.3" font-weight="bold" fill="#2f2b36" opacity="1" textLength="44.30" lengthAdjust="spacingAndGlyphs">[First name] [Last name]</text><text x="470" y="490.9" font-family="Liberation Sans, sans-serif" font-size="3.3" fill="#7d7888" opacity="1" textLength="9.00" lengthAdjust="spacingAndGlyphs">{title}</text><text x="470" y="496" font-family="Liberation Sans, sans-serif" font-size="3.3" fill="#6f6a80" opacity="1" textLength="40.50" lengthAdjust="spacingAndGlyphs">P: {Phone}{P} | M: {Mobile}{M}</text><text x="470" y="500" font-family="Liberation Sans, sans-serif" font-size="3.3" fill="#6f6a80" opacity="1" textLength="12.60" lengthAdjust="spacingAndGlyphs">E: {E-mail}</text><text x="470" y="504.2" font-family="Liberation Sans, sans-serif" font-size="3.5" fill="#7f92d8" opacity="1" textLength="28.70" lengthAdjust="spacingAndGlyphs">www.my-company.com</text><rect x="470" y="504.72" width="28.70" height="0.35" fill="#9aa8e0" opacity="0.8"/><text x="470" y="513" font-family="Liberation Sans, sans-serif" font-size="3.4" fill="#6a6574" opacity="1" textLength="58.70" lengthAdjust="spacingAndGlyphs">21 Greeting Road, Anytown NY 12345, USA</text></g></svg><!-- /THUMB3 -->
<div class="t nm" id="nm3" style="left:574.76px;top:465.5px;letter-spacing:0.096px">Internal signature</div>
<div class="t ds" id="da3" style="left:574.62px;top:486.5px;letter-spacing:0.095px">Signature rule for internal</div>
<div class="t ds" id="db3" style="left:575.04px;top:507.5px;letter-spacing:0.060px">communication. A compact version o...</div>
<div class="t dt" id="dt3" style="left:839.98px;top:466.0px;letter-spacing:-0.002px">9/27/2024, 10:02:03 AM</div>
<div class="t ds" id="by3" style="left:839.99px;top:486.5px;letter-spacing:-0.132px">by: John Doe</div>
<svg class="abs" style="left:1074px;top:487px" width="26" height="26" viewBox="0 0 26 26"><circle cx="10" cy="10" r="8" fill="#5cb45c"/><path d="M6 10 L9 13.2 L14.6 7" fill="none" stroke="#fff" stroke-width="1.9"/></svg>
<div class="sep" style="top:548px"></div>
<div class="chk" style="top:591px"></div>
<!-- THUMB4 --><div class="thumb" style="top:563px"></div><svg class="abs" style="left:424px;top:564px" width="125" height="71" viewBox="424 564 125 71" ><g filter="url(#bl3)"><rect x="441.38" y="574.8" width="0.90" height="12" fill="#8fb0c8"/><rect x="442.96" y="574.8" width="0.90" height="12" fill="#3f78b8"/><rect x="444.50" y="574.8" width="0.90" height="12" fill="#5590d0"/><g fill="none" stroke-width="1.47" opacity=".55"><path d="M446.12 575.11 Q450.56 582.25 455.00 575.11" stroke="#c5dcf2"/><path d="M446.12 586.49 Q450.56 579.35 455.00 586.49" stroke="#c5dcf2"/><path d="M446.12 576.41 Q450.56 582.45 455.00 576.41" stroke="#c5dcf2"/><path d="M446.12 585.19 Q450.56 579.15 455.00 585.19" stroke="#c5dcf2"/><path d="M446.12 577.70 Q450.56 582.64 455.00 577.70" stroke="#c5dcf2"/><path d="M446.12 583.90 Q450.56 578.96 455.00 583.90" stroke="#c5dcf2"/><path d="M446.12 579.00 Q450.56 582.84 455.00 579.00" stroke="#c5dcf2"/><path d="M446.12 582.60 Q450.56 578.76 455.00 582.60" stroke="#c5dcf2"/></g><g fill="none" stroke-width="0.7"><path d="M446.12 575.11 Q450.56 582.25 455.00 575.11" stroke="#5590d0"/><path d="M446.12 586.49 Q450.56 579.35 455.00 586.49" stroke="#5590d0"/><path d="M446.12 576.41 Q450.56 582.45 455.00 576.41" stroke="#3f78b8"/><path d="M446.12 585.19 Q450.56 579.15 455.00 585.19" stroke="#3f78b8"/><path d="M446.12 577.70 Q450.56 582.64 455.00 577.70" stroke="#5590d0"/><path d="M446.12 583.90 Q450.56 578.96 455.00 583.90" stroke="#5590d0"/><path d="M446.12 579.00 Q450.56 582.84 455.00 579.00" stroke="#3f78b8"/><path d="M446.12 582.60 Q450.56 578.76 455.00 582.60" stroke="#3f78b8"/></g><g fill="none" stroke="#5f9aa8" stroke-width="0.63"><path d="M446.12 577.74 Q450.05 580.80 446.12 583.86"/><path d="M455.00 577.74 Q451.07 580.80 455.00 583.86"/><path d="M447.40 578.45 Q450.82 580.80 447.40 583.15"/><path d="M453.72 578.45 Q450.30 580.80 453.72 583.15"/></g><text x="438.9" y="592.8" font-family="Liberation Sans, sans-serif" font-size="5.3" font-weight="bold" fill="#111" textLength="18.1" lengthAdjust="spacingAndGlyphs">company</text><rect x="438.9" y="598" width="4.1" height="4" fill="#21418f"/><rect x="443" y="598" width="4.1" height="4" fill="#4da5e2"/><rect x="447" y="598" width="4.1" height="4" fill="#141414"/><rect x="451.1" y="598" width="4.1" height="4" fill="#c2323c"/><rect x="440.4" y="599.20" width="1.00" height="1.6" fill="#fff" opacity="0.8"/><rect x="452.6" y="599.30" width="1.00" height="1.4" fill="#fff" opacity="0.6"/><rect x="458.3" y="574.75" width="0.80" height="51.7" fill="#a5a5a5" opacity="1"/><text x="462.4" y="581.3" font-family="Liberation Sans, sans-serif" font-size="5.7" fill="#6a6476" textLength="39" lengthAdjust="spacingAndGlyphs">Support mailbox</text><rect x="462.4" y="589.85" width="1.20" height="0.9" fill="#e08a80" opacity="0.9"/><text x="466.8" y="591.1999999999999" font-family="Liberation Sans, sans-serif" font-size="2.6" fill="#8a82a8" opacity="0.75" textLength="15.20" lengthAdjust="spacingAndGlyphs">www.{E-mail}</text><rect x="462.4" y="594.65" width="1.20" height="0.9" fill="#e08a80" opacity="0.9"/><text x="466.8" y="596.0" font-family="Liberation Sans, sans-serif" font-size="2.6" fill="#8a82a8" opacity="0.75" textLength="56.20" lengthAdjust="spacingAndGlyphs">(877) service {Mobile} | (877) 877-xxxxx {Phone}{P}</text><rect x="462.4" y="598.75" width="1.20" height="0.9" fill="#e08a80" opacity="0.9"/><text x="466.8" y="600.1" font-family="Liberation Sans, sans-serif" font-size="2.6" fill="#8a82a8" opacity="0.75" textLength="49.20" lengthAdjust="spacingAndGlyphs">21 Greeting Road, Anytown NY 12345, USA</text><text x="462.4" y="610" font-family="Liberation Sans, sans-serif" font-size="2.6" fill="#7d7888" opacity="0.8" textLength="42.60" lengthAdjust="spacingAndGlyphs">How would you rate our Customer Service?</text><rect x="462.4" y="614.5" width="13.9" height="4.4" rx="2.2" fill="#e4d93c"/><rect x="464.59999999999997" y="616.00" width="1.40" height="1.4" fill="#fff" opacity="0.85"/><text x="467.2" y="617.6" font-family="Liberation Sans, sans-serif" font-size="2.5" font-weight="bold" fill="#fff" opacity="1" textLength="6.50" lengthAdjust="spacingAndGlyphs">SUPERB</text><rect x="477.2" y="614.5" width="14.0" height="4.4" rx="2.2" fill="#8cc24a"/><rect x="479.4" y="616.00" width="1.40" height="1.4" fill="#fff" opacity="0.85"/><text x="482.0" y="617.6" font-family="Liberation Sans, sans-serif" font-size="2.5" font-weight="bold" fill="#fff" opacity="1" textLength="6.60" lengthAdjust="spacingAndGlyphs">SUPERB</text><rect x="491.9" y="614.5" width="14.1" height="4.4" rx="2.2" fill="#f29b38"/><rect x="494.09999999999997" y="616.00" width="1.40" height="1.4" fill="#fff" opacity="0.85"/><text x="496.7" y="617.6" font-family="Liberation Sans, sans-serif" font-size="2.5" font-weight="bold" fill="#fff" opacity="1" textLength="6.70" lengthAdjust="spacingAndGlyphs">SUPERB</text><rect x="506.8" y="614.5" width="13.9" height="4.4" rx="2.2" fill="#c2323c"/><rect x="509.0" y="616.00" width="1.40" height="1.4" fill="#fff" opacity="0.85"/><text x="511.6" y="617.6" font-family="Liberation Sans, sans-serif" font-size="2.5" font-weight="bold" fill="#fff" opacity="1" textLength="6.50" lengthAdjust="spacingAndGlyphs">SUPERB</text><text x="462.4" y="626.1" font-family="Liberation Sans, sans-serif" font-size="2.4" fill="#6f98d8" opacity="1" textLength="59.60" lengthAdjust="spacingAndGlyphs">Click here to learn more about our integrated e-commerce campaigns</text></g></svg><!-- /THUMB4 -->
<div class="t nm" id="nm4" style="left:575.01px;top:567.5px;letter-spacing:0.006px">Sales and Marketing Signature</div>
<div class="t ds" id="da4" style="left:574.53px;top:588.5px;letter-spacing:0.011px">Non-seasonal external signature for</div>
<div class="t ds" id="db4" style="left:574.62px;top:609.5px;letter-spacing:-0.064px">Sales and Marketing</div>
<div class="t dt" id="dt4" style="left:839.98px;top:568.0px;letter-spacing:-0.002px">9/27/2024, 10:00:58 AM</div>
<div class="t ds" id="by4" style="left:839.99px;top:588.5px;letter-spacing:-0.132px">by: John Doe</div>
<svg class="abs" style="left:1074px;top:589px" width="26" height="26" viewBox="0 0 26 26"><circle cx="10" cy="10" r="8" fill="#5cb45c"/><path d="M6 10 L9 13.2 L14.6 7" fill="none" stroke="#fff" stroke-width="1.9"/></svg>
<div class="sep" style="top:650px"></div>
<div class="chk" style="top:693px"></div>
<!-- THUMB5 --><svg class="abs" style="left:414px;top:662px" width="140" height="84" viewBox="414 662 140 84" ><rect x="460.5" y="686.5" width="89" height="51" fill="#fff" stroke="#d2d2d2"/><g filter="url(#bl3)"><text x="493" y="708.2" font-family="Liberation Sans, sans-serif" font-size="2.4" font-weight="bold" fill="#4a3a5a" opacity="1" textLength="28.50" lengthAdjust="spacingAndGlyphs">[First name] [Last name]</text><text x="468.3" y="721.6" font-family="Liberation Sans, sans-serif" font-size="5.2" font-weight="bold" fill="#222" textLength="17.6" lengthAdjust="spacingAndGlyphs">company</text><rect x="489.2" y="710.00" width="0.60" height="12" fill="#ddd" opacity="1"/><text x="493" y="715.7" font-family="Liberation Sans, sans-serif" font-size="2.3" fill="#77728c" opacity="1" textLength="28.50" lengthAdjust="spacingAndGlyphs">P: {Phone}{P} | M: {Mobile}{M}</text><text x="493" y="718.8" font-family="Liberation Sans, sans-serif" font-size="2.3" fill="#6f74b8" opacity="1" textLength="28.50" lengthAdjust="spacingAndGlyphs">E: {E-mail} | www.my-company</text><text x="493" y="721.8" font-family="Liberation Sans, sans-serif" font-size="2.3" fill="#9a8eb8" opacity="1" textLength="42.00" lengthAdjust="spacingAndGlyphs">21 Greeting Road, Anytown NY 12345, USA</text></g><rect x="423.5" y="665.5" width="89" height="50.5" fill="#fff" stroke="#d2d2d2"/><g filter="url(#bl3)"><rect x="433" y="677" width="3" height="7.8" fill="#8ea9c0"/><rect x="433.25" y="677" width="0.58" height="7.8" fill="#8ea9c0"/><rect x="434.28" y="677" width="0.58" height="7.8" fill="#3f74b0"/><rect x="435.27" y="677" width="0.58" height="7.8" fill="#5a8cc8"/><g fill="none" stroke-width="1.58" opacity=".55"><path d="M436.33 677.20 Q439.21 681.84 442.10 677.20" stroke="#b5cfea"/><path d="M436.33 684.60 Q439.21 679.96 442.10 684.60" stroke="#b5cfea"/><path d="M436.33 678.05 Q439.21 681.97 442.10 678.05" stroke="#b5cfea"/><path d="M436.33 683.75 Q439.21 679.83 442.10 683.75" stroke="#b5cfea"/><path d="M436.33 678.89 Q439.21 682.10 442.10 678.89" stroke="#b5cfea"/><path d="M436.33 682.91 Q439.21 679.70 442.10 682.91" stroke="#b5cfea"/><path d="M436.33 679.73 Q439.21 682.23 442.10 679.73" stroke="#b5cfea"/><path d="M436.33 682.07 Q439.21 679.57 442.10 682.07" stroke="#b5cfea"/></g><g fill="none" stroke-width="0.75"><path d="M436.33 677.20 Q439.21 681.84 442.10 677.20" stroke="#5a8cc8"/><path d="M436.33 684.60 Q439.21 679.96 442.10 684.60" stroke="#5a8cc8"/><path d="M436.33 678.05 Q439.21 681.97 442.10 678.05" stroke="#3f74b0"/><path d="M436.33 683.75 Q439.21 679.83 442.10 683.75" stroke="#3f74b0"/><path d="M436.33 678.89 Q439.21 682.10 442.10 678.89" stroke="#5a8cc8"/><path d="M436.33 682.91 Q439.21 679.70 442.10 682.91" stroke="#5a8cc8"/><path d="M436.33 679.73 Q439.21 682.23 442.10 679.73" stroke="#3f74b0"/><path d="M436.33 682.07 Q439.21 679.57 442.10 682.07" stroke="#3f74b0"/></g><g fill="none" stroke="#5a8c9c" stroke-width="0.68"><path d="M436.33 678.91 Q438.88 680.90 436.33 682.89"/><path d="M442.10 678.91 Q439.55 680.90 442.10 682.89"/><path d="M437.16 679.37 Q439.38 680.90 437.16 682.43"/><path d="M441.27 679.37 Q439.05 680.90 441.27 682.43"/></g><text x="431" y="688.9" font-family="Liberation Sans, sans-serif" font-size="3.4" font-weight="bold" fill="#222" opacity="1" textLength="13.00" lengthAdjust="spacingAndGlyphs">company</text><rect x="446.3" y="677.00" width="0.60" height="12" fill="#e4e4e4" opacity="1"/><text x="450" y="679.3" font-family="Liberation Sans, sans-serif" font-size="2.4" font-weight="bold" fill="#4a3a5a" opacity="1" textLength="22.00" lengthAdjust="spacingAndGlyphs">[First name] [Last name]</text><text x="450" y="682.1" font-family="Liberation Sans, sans-serif" font-size="1.9" fill="#a09ab0" opacity="1" textLength="5.00" lengthAdjust="spacingAndGlyphs">{title}</text><text x="450" y="684.7" font-family="Liberation Sans, sans-serif" font-size="2.2" fill="#77728c" opacity="1" textLength="22.00" lengthAdjust="spacingAndGlyphs">P: {Phone}{P} | M: {Mobile}</text><text x="450" y="686.7" font-family="Liberation Sans, sans-serif" font-size="2.2" fill="#77728c" opacity="1" textLength="22.00" lengthAdjust="spacingAndGlyphs">E: {E-mail} | www.company</text><text x="450" y="689" font-family="Liberation Sans, sans-serif" font-size="2.2" fill="#9a8eb8" opacity="1" textLength="32.00" lengthAdjust="spacingAndGlyphs">21 Greeting Road, Anytown NY 12345, USA</text><rect x="492.6" y="687.2" width="2.1" height="2.1" fill="#9cc0e4" opacity=".85"/><rect x="495.6" y="687.2" width="2.1" height="2.1" fill="#9cc0e4" opacity=".85"/><rect x="498.6" y="687.2" width="2.1" height="2.1" fill="#9cc0e4" opacity=".85"/><rect x="501.6" y="687.2" width="2.1" height="2.1" fill="#9cc0e4" opacity=".85"/><rect x="504.6" y="687.2" width="2.1" height="2.1" fill="#9cc0e4" opacity=".85"/></g><g filter="url(#bl3)"><clipPath id="ebc"><rect x="431" y="693.3" width="76" height="12"/></clipPath><g clip-path="url(#ebc)"><rect x="431" y="693.3" width="76" height="12" fill="#2a60aa"/><path d="M431 705.3 V693.3 H446 L438 705.3 Z" fill="#3a78c4"/><path d="M423.5 705.3 L431.5 693.3" stroke="#2a60aa" stroke-width=".55" opacity=".8"/><path d="M425.2 705.3 L433.2 693.3" stroke="#2a60aa" stroke-width=".55" opacity=".8"/><path d="M426.9 705.3 L434.9 693.3" stroke="#2a60aa" stroke-width=".55" opacity=".8"/><path d="M428.6 705.3 L436.6 693.3" stroke="#2a60aa" stroke-width=".55" opacity=".8"/><path d="M430.3 705.3 L438.3 693.3" stroke="#2a60aa" stroke-width=".55" opacity=".8"/><path d="M432.0 705.3 L440.0 693.3" stroke="#2a60aa" stroke-width=".55" opacity=".8"/><path d="M433.7 705.3 L441.7 693.3" stroke="#2a60aa" stroke-width=".55" opacity=".8"/><path d="M435.4 705.3 L443.4 693.3" stroke="#2a60aa" stroke-width=".55" opacity=".8"/><path d="M437.1 705.3 L445.1 693.3" stroke="#2a60aa" stroke-width=".55" opacity=".8"/><path d="M470 705.3 L478 693.3 H484.5 L476.5 705.3 Z" fill="#3d7ecc"/><path d="M471.6 705.3 L479.6 693.3" stroke="#2a60aa" stroke-width=".5" opacity=".7"/><path d="M473.2 705.3 L481.2 693.3" stroke="#2a60aa" stroke-width=".5" opacity=".7"/><path d="M474.8 705.3 L482.8 693.3" stroke="#2a60aa" stroke-width=".5" opacity=".7"/><path d="M476.4 705.3 L484.4 693.3" stroke="#2a60aa" stroke-width=".5" opacity=".7"/><path d="M476.5 705.3 L484.5 693.3 H507 V705.3 Z" fill="#376aae"/><path d="M484 694 C490 693.5 497 695.5 507 693.3 V697 C499 697.5 491 697 482.5 696.5 Z" fill="#4f84c8" opacity=".8"/><path d="M480 699.6 C486 698.2 492 698.4 499 697.4" stroke="#a6c8ee" stroke-width="1.1" fill="none" opacity=".9"/><path d="M479.5 701.5 C486 699.8 494 700 501 698.6 L503 700 C497 701.6 489 702.6 480 704 Z" fill="#6f9cd8" opacity=".7"/><ellipse cx="500.5" cy="703" rx="7" ry="2.6" fill="#142f5a"/><ellipse cx="493" cy="700.6" rx="5" ry=".9" fill="#16346a"/><ellipse cx="503.5" cy="699.6" rx="2.4" ry="1.3" fill="#1b3d74"/><path d="M498 693.3 H507 V696 Z" fill="#2a5596" opacity=".8"/></g><text x="449.4" y="696.9" font-family="Liberation Sans, sans-serif" font-size="2.7" font-weight="bold" fill="#fff" opacity="1" textLength="12.60" lengthAdjust="spacingAndGlyphs">Get the best</text><text x="449.4" y="699.6" font-family="Liberation Sans, sans-serif" font-size="2.7" font-weight="bold" fill="#fff" opacity="1" textLength="17.60" lengthAdjust="spacingAndGlyphs">business apparel</text><path d="M450.4 700.9 H449.7 V703.4 H450.4 M463.3 700.9 H464 V703.4 H463.3" fill="none" stroke="#b8d0f0" stroke-width=".45"/><text x="451.6" y="703" font-family="Liberation Sans, sans-serif" font-size="2.5" font-weight="bold" fill="#b8d0f0" opacity="1" textLength="10.40" lengthAdjust="spacingAndGlyphs">LEARN MORE</text></g><rect x="416.9" y="708" width="26.1" height="13.8" rx="6.9" fill="#4f8ff8"/><text x="429.95" y="718.20" text-anchor="middle" font-family="Liberation Sans, sans-serif" font-size="8.4" font-weight="bold" fill="#fff" textLength="13" lengthAdjust="spacingAndGlyphs">1ST</text><rect x="453.9" y="729" width="26.1" height="13.8" rx="6.9" fill="#4f8ff8"/><text x="466.95" y="739.20" text-anchor="middle" font-family="Liberation Sans, sans-serif" font-size="8.4" font-weight="bold" fill="#fff" textLength="16" lengthAdjust="spacingAndGlyphs">2ND</text></svg><!-- /THUMB5 -->
<div class="t nm" id="nm5" style="left:574.76px;top:669.5px;letter-spacing:-0.043px">External signature</div>
<div class="t ds" id="da5" style="left:574.62px;top:690.5px;letter-spacing:0.035px">Signature rule for external</div>
<div class="t ds" id="db5" style="left:575.04px;top:711.5px;letter-spacing:0.153px">communication.</div>
<div class="t dt" id="dt5" style="left:839.98px;top:670.0px;letter-spacing:-0.002px">9/27/2024, 10:01:09 AM</div>
<div class="t ds" id="by5" style="left:839.99px;top:690.5px;letter-spacing:-0.132px">by: John Doe</div>
<svg class="abs" style="left:1074px;top:691px" width="26" height="26" viewBox="0 0 26 26"><circle cx="10" cy="10" r="8" fill="#5cb45c"/><path d="M6 10 L9 13.2 L14.6 7" fill="none" stroke="#fff" stroke-width="1.9"/></svg>
<!-- scrollbar -->
<svg class="abs" style="left:1322px;top:152px" width="10" height="8" viewBox="0 0 10 8"><path d="M1.8 6 L5 2.6 L8.2 6 Z" fill="#606060"/></svg>
<div class="abs" style="left:1324px;top:162px;width:6px;height:230px;border-radius:3px;background:#7d7d7d"></div>
<svg class="abs" style="left:1322px;top:756px" width="10" height="8" viewBox="0 0 10 8"><path d="M1.8 3 L5 6.4 L8.2 3 Z" fill="#606060"/></svg>

</div></div>
</body>
</html>
